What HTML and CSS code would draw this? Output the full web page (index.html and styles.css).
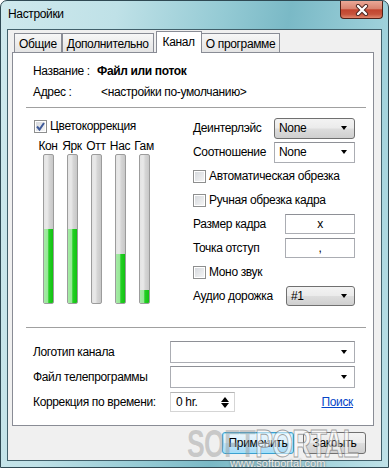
FILE: index.html
```html
<!DOCTYPE html>
<html lang="ru">
<head>
  <meta charset="UTF-8">
  <title>Настройки</title>
  <link rel="stylesheet" href="styles.css">
</head>
<body>
  <div class="window">
    <div class="titlebar">
      <span class="title">Настройки</span>
      <button class="close">
        <svg width="18" height="12" viewBox="0 0 18 12">
          <path d="M5 2 L13 10 M13 2 L5 10" stroke="#4b2620" stroke-width="4.2" stroke-linecap="round"/>
          <path d="M5 2 L13 10 M13 2 L5 10" stroke="#fff" stroke-width="2.4" stroke-linecap="round"/>
        </svg>
      </button>
    </div>

    <div class="client">
      <div class="tabbox">
        <div class="tabs">
          <div class="tab">Общие</div>
          <div class="tab">Дополнительно</div>
          <div class="tab active">Канал</div>
          <div class="tab">О программе</div>
        </div>

        <div class="panel">
          <div class="info">
            <span>Название :</span><b>Файл или поток</b>
            <span>Адрес :</span><span class="addr">&lt;настройки по-умолчанию&gt;</span>
          </div>
          <hr class="sep">

          <div class="middle">
            <div class="color-group">
              <label class="check">
                <span class="box">
                  <svg width="11" height="11" viewBox="0 0 11 11"><path d="M2 5.5 L4.5 8.5 L9 2" fill="none" stroke="#3e5a9a" stroke-width="2"/></svg>
                </span>
                Цветокоррекция
              </label>
              <div class="sliders">
                <div class="slider-col"><span>Кон</span><div class="bar"><div class="fill" style="height:50%"></div></div></div>
                <div class="slider-col"><span>Ярк</span><div class="bar"><div class="fill" style="height:50%"></div></div></div>
                <div class="slider-col"><span>Отт</span><div class="bar"><div class="fill" style="height:0%"></div></div></div>
                <div class="slider-col"><span>Нас</span><div class="bar"><div class="fill" style="height:33%"></div></div></div>
                <div class="slider-col"><span>Гам</span><div class="bar"><div class="fill" style="height:9%"></div></div></div>
              </div>
            </div>

            <div class="options">
              <div class="row">
                <span>Деинтерлэйс</span>
                <div class="combo btn-combo wide">None<i class="arrow"></i></div>
              </div>
              <div class="row">
                <span>Соотношение</span>
                <div class="combo wide">None<i class="arrow"></i></div>
              </div>
              <label class="row check"><span class="box"></span>Автоматическая обрезка</label>
              <label class="row check"><span class="box"></span>Ручная обрезка кадра</label>
              <div class="row">
                <span>Размер кадра</span>
                <div class="textbox">x</div>
              </div>
              <div class="row">
                <span>Точка отступ</span>
                <div class="textbox">,</div>
              </div>
              <label class="row check"><span class="box"></span>Моно звук</label>
              <div class="row">
                <span>Аудио дорожка</span>
                <div class="combo btn-combo narrow">#1<i class="arrow"></i></div>
              </div>
            </div>
          </div>
          <hr class="sep">

          <div class="extra">
            <span>Логотип канала</span>
            <div class="combo"><i class="arrow"></i></div>
            <span>Файл телепрограммы</span>
            <div class="combo"><i class="arrow"></i></div>
            <span>Коррекция по времени:</span>
            <div class="time-cell">
              <div class="spin">0 hr.<span class="spin-arrows"><i class="up"></i><i class="down"></i></span></div>
              <a class="link" href="#">Поиск</a>
            </div>
          </div>
        </div>
      </div>

      <div class="buttons">
        <button class="button default">Применить</button>
        <button class="button">Закрыть</button>
      </div>
    </div>

    <div class="wm-logo"><span class="wm-soft">SOFT</span><span class="wm-portal">PORTAL</span></div>
    <div class="wm-url">www.softportal.com</div>
  </div>
</body>
</html>
```

FILE: styles.css
```css
body {
  margin: 0;
  font-family: "Liberation Sans", Arial, sans-serif;
  font-size: 12px;
  letter-spacing: -0.35px;
  color: #000;
}
.window {
  position: relative;
  width: 389px;
  height: 468px;
  box-sizing: border-box;
  border: 1px solid #2f4953;
  border-radius: 7px 7px 0 0;
  background: linear-gradient(100deg, #cfe9ed 0%, #bfe1e7 25%, #94cad4 48%, #7ab9c6 62%, #9dd0da 82%, #bfe2e8 100%);
  display: flex;
  flex-direction: column;
  overflow: hidden;
}
.titlebar {
  height: 28px;
  flex: none;
  display: flex;
  justify-content: space-between;
  align-items: flex-start;
}
.title {
  margin: 6px 0 0 7px;
}
.close {
  width: 43px;
  height: 18px;
  margin-right: 5px;
  padding: 0;
  box-sizing: border-box;
  border: 1px solid #512219;
  border-top: none;
  border-radius: 0 0 4px 4px;
  background: linear-gradient(#eaa897, #d98470 45%, #c2452f 52%, #c6533b 78%, #e0866c);
  display: flex;
  align-items: center;
  justify-content: center;
}
.client {
  flex: 1;
  margin: 0 6px 6px;
  border: 1px solid #41606b;
  background: #f0f0f0;
  display: flex;
  flex-direction: column;
}
.tabbox {
  margin: 1px 7px 0 4px;
}
.tabs {
  display: flex;
  align-items: flex-end;
  height: 21px;
  padding-left: 2px;
}
.tab {
  height: 19px;
  box-sizing: border-box;
  border: 1px solid #898c95;
  border-bottom: none;
  padding: 3px 4px 0;
  background: linear-gradient(#f7f7f7, #e4e4e4);
}
.tab.active {
  position: relative;
  height: 22px;
  margin: 0 -1px -1px 2px;
  padding: 3px 6px 0;
  background: #fff;
}
.panel {
  height: 374px;
  box-sizing: border-box;
  border: 1px solid #898c95;
  background: #fff;
}
.info {
  display: grid;
  grid-template-columns: 64px auto;
  grid-auto-rows: 21px;
  align-items: center;
  padding: 7px 0 0 20px;
}
.addr {
  padding-left: 4px;
}
.sep {
  border: none;
  border-top: 1px solid #a0a0a0;
  margin: 5px 7px 0 13px;
}
.middle {
  display: flex;
  padding: 10px 0 14px 21px;
}
.color-group {
  width: 159px;
}
.check {
  display: flex;
  align-items: center;
  gap: 3px;
  height: 16px;
}
.box {
  width: 13px;
  height: 13px;
  box-sizing: border-box;
  border: 1px solid #8e8f8f;
  background: linear-gradient(135deg, #d3d6db, #f7f7f7);
  box-shadow: inset 0 0 0 1px #fff;
  display: flex;
  align-items: center;
  justify-content: center;
  flex: none;
}
.sliders {
  display: flex;
  margin-top: 5px;
  padding-left: 2px;
}
.slider-col {
  width: 24px;
  display: flex;
  flex-direction: column;
  align-items: center;
}
.slider-col span {
  height: 14px;
  margin-bottom: 1px;
  white-space: nowrap;
}
.bar {
  width: 11px;
  height: 150px;
  box-sizing: border-box;
  border: 1px solid #9c9c9c;
  border-radius: 2px;
  background: linear-gradient(90deg, #e4e4e4 0, #e9e9e9 35%, #d5d5d5 60%, #c8c8c8 100%);
  display: flex;
  flex-direction: column;
  justify-content: flex-end;
  overflow: hidden;
}
.fill {
  background: linear-gradient(90deg, #a6eba6 0, #96e696 45%, #25d025 52%, #12c212 100%);
}
.options {
  width: 162px;
  margin-top: -2px;
  display: flex;
  flex-direction: column;
}
.row {
  height: 24px;
  display: flex;
  justify-content: space-between;
  align-items: center;
}
.row.check {
  justify-content: flex-start;
  gap: 3px;
}
.combo {
  height: 21px;
  box-sizing: border-box;
  border: 1px solid #abadb3;
  border-top-color: #8e9096;
  background: #fff;
  display: flex;
  align-items: center;
  justify-content: space-between;
  padding: 0 7px 0 4px;
}
.btn-combo {
  border: 1px solid #707070;
  border-radius: 3px;
  background: linear-gradient(#f3f3f3, #ebebeb 48%, #dddddd 52%, #cfcfcf);
}
.wide {
  width: 81px;
}
.narrow {
  width: 69px;
  height: 20px;
}
.arrow {
  width: 0;
  height: 0;
  border-left: 3.5px solid transparent;
  border-right: 3.5px solid transparent;
  border-top: 4px solid #000;
}
.textbox {
  width: 70px;
  height: 20px;
  box-sizing: border-box;
  border: 1px solid #abadb3;
  border-top-color: #8e9096;
  display: flex;
  align-items: center;
  justify-content: center;
}
.extra {
  display: grid;
  grid-template-columns: 137px 1fr;
  grid-auto-rows: 22px;
  row-gap: 3px;
  align-items: center;
  padding: 13px 18px 0 20px;
}
.extra .combo {
  height: 22px;
  justify-content: flex-end;
}
.time-cell {
  display: flex;
  justify-content: space-between;
  align-items: center;
}
.spin {
  width: 65px;
  height: 20px;
  box-sizing: border-box;
  border: 1px solid #d5d5d5;
  border-top-color: #b5b5b5;
  padding: 0 5px;
  display: flex;
  align-items: center;
  justify-content: space-between;
}
.spin-arrows {
  display: flex;
  flex-direction: column;
  gap: 1px;
}
.spin-arrows .up {
  border-left: 4px solid transparent;
  border-right: 4px solid transparent;
  border-bottom: 5px solid #000;
}
.spin-arrows .down {
  border-left: 4px solid transparent;
  border-right: 4px solid transparent;
  border-top: 5px solid #000;
}
.link {
  color: #0645c8;
  margin-right: 2px;
}
.buttons {
  display: flex;
  justify-content: flex-end;
  gap: 9px;
  margin: 6px 15px 0 0;
}
.button {
  height: 22px;
  padding: 0;
  font: inherit;
  letter-spacing: inherit;
  border: 1px solid #707070;
  border-radius: 3px;
  background: linear-gradient(#f3f3f3, #ebebeb 48%, #dddddd 52%, #cfcfcf);
  width: 63px;
}
.button.default {
  width: 72px;
  border-color: #3c9fd0;
  box-shadow: inset 0 0 0 1px #9fe3fb;
  background: linear-gradient(#eaf6fd, #d9f0fc 48%, #bee6fd 52%, #a7d9f5);
}
.wm-logo {
  position: absolute;
  left: 186px;
  top: 422px;
  font-size: 38px;
  font-weight: bold;
  letter-spacing: -1px;
  transform: scaleX(0.7);
  transform-origin: left top;
  pointer-events: none;
}
.wm-soft {
  color: rgba(150, 150, 150, 0.45);
}
.wm-portal {
  color: rgba(255, 255, 255, 0.55);
  -webkit-text-stroke: 1px rgba(120, 120, 120, 0.7);
}
.wm-url {
  position: absolute;
  left: 229px;
  top: 456px;
  font-size: 11px;
  letter-spacing: 0;
  color: #eee;
  text-shadow: 0 0 2px #555;
}
```
